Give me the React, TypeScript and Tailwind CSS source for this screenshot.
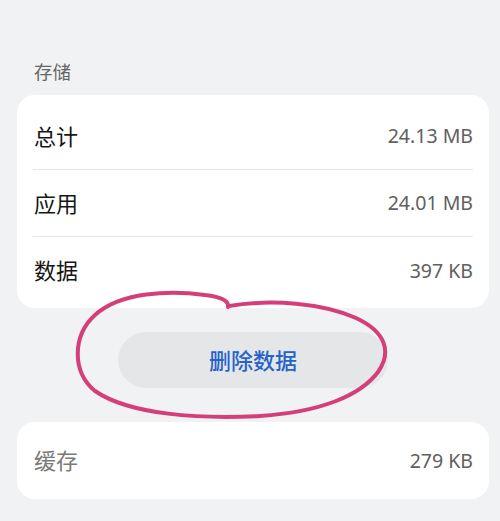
import React from "react";

const rows = [
  { label: "总计", value: "24.13 MB" },
  { label: "应用", value: "24.01 MB" },
  { label: "数据", value: "397 KB" },
];

const font = { fontFamily: '"Noto Sans", "Noto Sans CJK SC", sans-serif' };

export default function App() {
  return (
    <div className="relative h-[521px] w-[500px] overflow-hidden bg-[#f1f2f4]" style={font}>
      <div className="pl-[17px] pr-[11px] pt-[58px]">
        <p className="pl-[17px] text-[18.5px] leading-[28px] text-[#666666]">存储</p>

        <div className="mt-[9px] rounded-[18px] bg-white px-[16px] pt-[8px] pb-[4px]">
          {rows.map((r, i) => (
            <div key={r.label} className={`flex h-[67px] items-center justify-between ${i < rows.length - 1 ? "border-b border-[#e6e6e6]" : ""}`}>
              <span className="pl-[1px] text-[22px] text-[#161616]">{r.label}</span>
              <span className="text-[19.5px] text-[#606060]">{r.value}</span>
            </div>
          ))}
        </div>

        <div className="mt-[24px] flex">
          <button className="ml-[101px] flex h-[56px] w-[270px] items-center justify-center rounded-full bg-[#e5e6e8] text-[22px] font-medium text-[#2563c9]">
            删除数据
          </button>
        </div>

        <div className="mt-[34px] flex h-[77px] items-center justify-between rounded-[18px] bg-white px-[16px]">
          <span className="pl-[1px] text-[22px] text-[#7a7a7a]">缓存</span>
          <span className="text-[19.5px] text-[#606060]">279 KB</span>
        </div>
      </div>

      {/* hand-drawn annotation */}
      <svg className="pointer-events-none absolute left-0 top-0" width="500" height="521" viewBox="0 0 500 521" fill="none">
        <path
          d="M228 307 C229 301 222 297 205 295 C170 290 120 292 95 315 C72 336 72 372 95 391 C130 415 200 419 260 416 C320 412 360 396 378 372 C392 352 386 332 356 318 C322 303 272 299 229 306"
          stroke="#d43f7a"
          strokeWidth="4"
          strokeLinecap="round"
          strokeLinejoin="round"
        />
      </svg>
    </div>
  );
}
